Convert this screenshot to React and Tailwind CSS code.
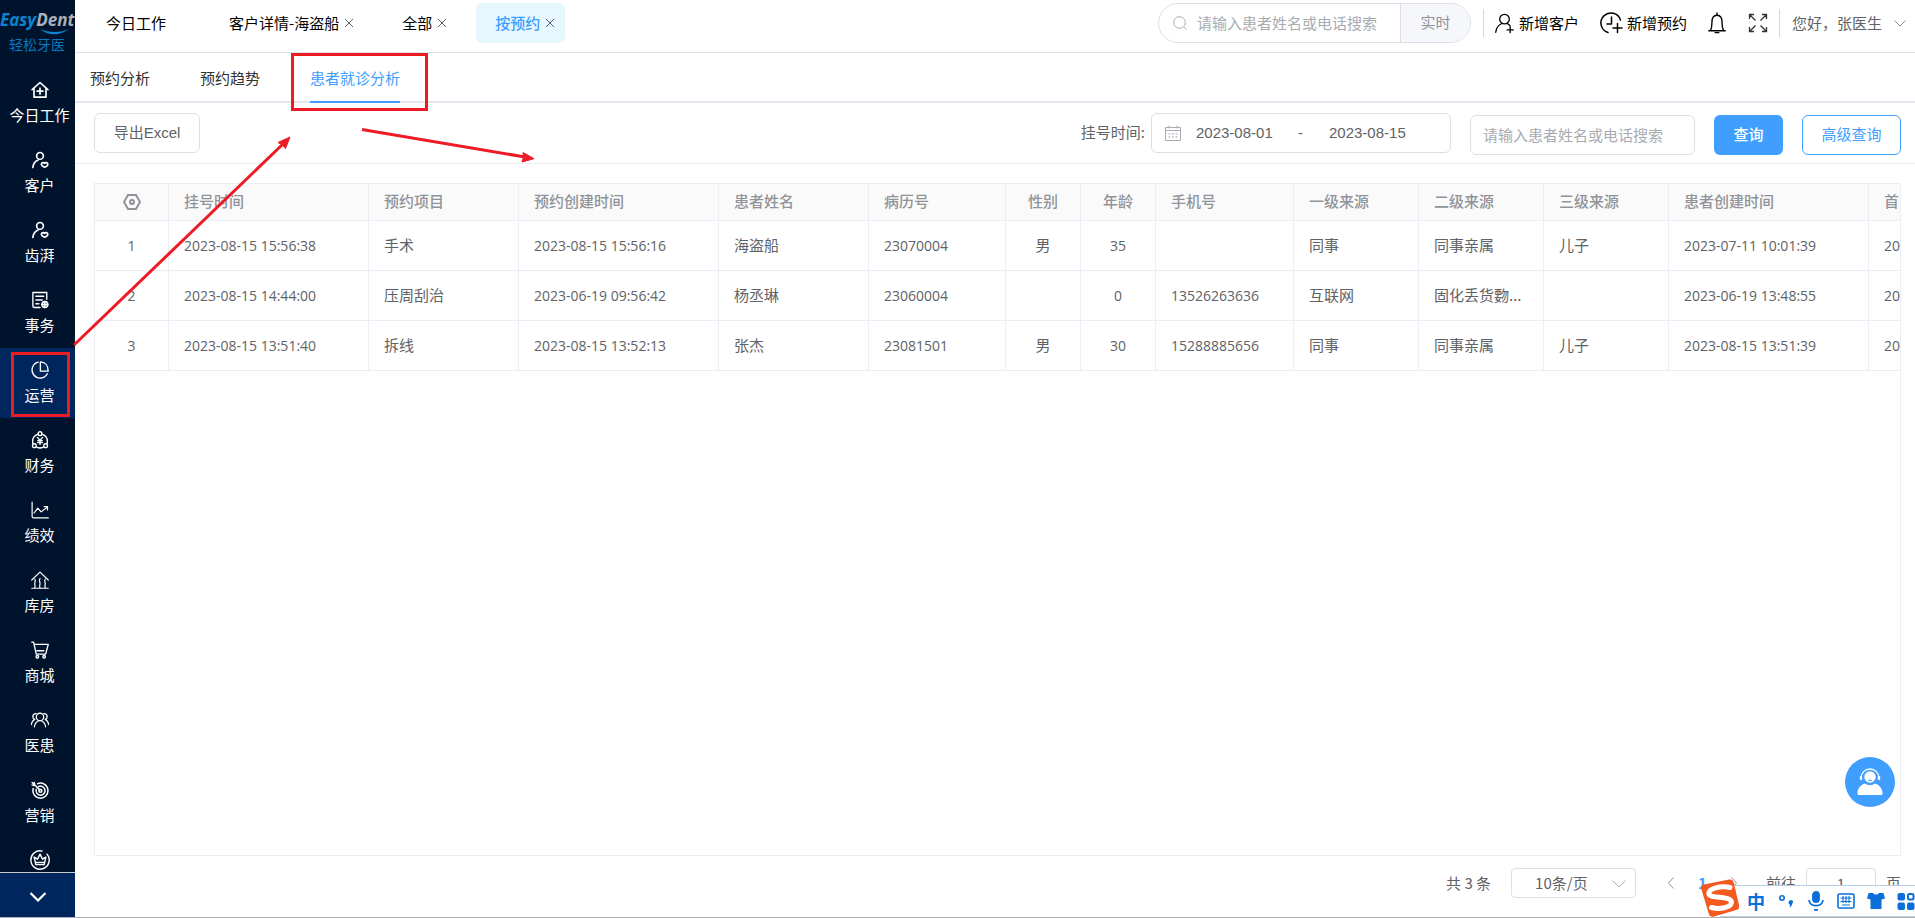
import React, { useState } from "react";

const Icon = ({ className, children, width = 1.8 }) => (
  <svg
    viewBox="0 0 24 24"
    fill="none"
    stroke="currentColor"
    strokeWidth={width}
    strokeLinecap="round"
    strokeLinejoin="round"
    className={className}
    aria-hidden="true"
  >
    {children}
  </svg>
);

const menus = [
  {
    name: "今日工作",
    width: 2.2,
    icon: (
      <>
        <path d="M1.500 11.500 12 2l10.500 9.500" />
        <path d="M4 10v11.500h16V10" />
        <path d="M12 9.500v8M8 13.500h8" />
      </>
    ),
  },
  {
    name: "客户",
    width: 2.2,
    icon: (
      <>
        <circle cx="12" cy="6.500" r="4.500" />
        <path d="M2.500 22c.5-5 3-8.500 7-10" />
        <path d="M18 21.500c-3.500-1-5-3.500-3.500-5.300 1.100-1.200 2.600-.8 3.500.4.900-1.200 2.500-1.600 3.700-.4 1.600 1.900 0 4.500-3.700 5.300z" />
      </>
    ),
  },
  {
    name: "齿湃",
    width: 2.2,
    icon: (
      <>
        <circle cx="12" cy="6.500" r="4.500" />
        <path d="M2.500 22c.5-5 3-8.500 7-10" />
        <path d="M18 21.500c-3.500-1-5-3.500-3.500-5.300 1.100-1.200 2.600-.8 3.500.4.900-1.200 2.500-1.600 3.700-.4 1.600 1.900 0 4.500-3.700 5.300z" />
      </>
    ),
  },
  {
    name: "事务",
    width: 1.8,
    icon: (
      <>
        <path d="M12 22H4.500a2 2 0 0 1-2-2V2H21v9" />
        <path d="M6.500 7H17M6.500 12H15M6.500 17h4" />
        <circle cx="18.500" cy="18" r="4" fill="#ffffff66" />
        <path d="M14.500 18h8M18.500 14v8" />
      </>
    ),
  },
  {
    name: "运营",
    width: 1.8,
    icon: (
      <>
        <path d="M9.500 1.500A10.800 10.800 0 1 0 21.800 17" />
        <path d="M12.500 1.200V13.500H23C23 6.500 19 1.500 12.500 1.200z" />
      </>
    ),
  },
  {
    name: "财务",
    width: 1.8,
    icon: (
      <>
        <circle cx="12" cy="3.500" r="2.500" />
        <circle cx="4.500" cy="19.500" r="2.500" />
        <circle cx="19.500" cy="19.500" r="2.500" />
        <path d="M9 4.500C4 6 1.500 11 2.500 17M15 4.500c5 1.500 7.500 6.500 6.500 12.500M7.500 21.500c3 1.500 6 1.500 9 0" />
        <path d="m8.500 8.500 3.500 4 3.500-4M12 12.500V18M9 13h6M9 15.500h6" />
      </>
    ),
  },
  {
    name: "绩效",
    width: 1.6,
    icon: (
      <>
        <path d="M1.500 1.500v19a2 2 0 0 0 2 2H23" />
        <path d="m4 16 5-6.500 4.500 5L22 8" />
        <path d="M17.500 7.500H22V12" />
      </>
    ),
  },
  {
    name: "库房",
    width: 1.6,
    icon: (
      <>
        <path d="M1 12 12 1.500 23 12M1 23h22" />
        <path d="M5 11c2 2.500-.5 4 0 6.500s1 2.500 0 5M12 10c-2 3 .5 5 0 7.500s-1 2.500 0 5M19 11c-2 2.500.5 4 0 6.500s-1 2.500 0 5" />
      </>
    ),
  },
  {
    name: "商城",
    width: 1.8,
    icon: (
      <>
        <path d="M1 1.500h2.500L7 17.500h12.500L23 4.500H4.500" />
        <path d="M8 13h9" />
        <circle cx="8.500" cy="21" r="1.700" />
        <circle cx="17.500" cy="21" r="1.700" />
      </>
    ),
  },
  {
    name: "医患",
    width: 1.7,
    icon: (
      <>
        <circle cx="12" cy="8" r="5" />
        <path d="M4.500 21c.5-4 2.500-6.500 5.500-8M19.500 21c-.5-4-2.500-6.500-5.500-8" />
        <path d="M7 3.500c-5-.5-6 6-2 8M17 3.500c5-.5 6 6 2 8M.5 18c.3-3 1.500-5 4-6.500M23.500 18c-.3-3-1.500-5-4-6.500" />
      </>
    ),
  },
  {
    name: "营销",
    width: 2,
    icon: (
      <>
        <path d="M9 3.500A10 10 0 1 1 3 10" />
        <path d="M10 7.500A6 6 0 1 1 7 11" />
        <circle cx="12.500" cy="13" r="2" />
        <path d="M1.500 2 12 12M1.500 5.500 5 6l-.5-4" />
      </>
    ),
  },
];

const columns = [
  { key: "time", title: "挂号时间", num: true },
  { key: "item", title: "预约项目" },
  { key: "created", title: "预约创建时间", num: true },
  { key: "name", title: "患者姓名" },
  { key: "code", title: "病历号", num: true },
  { key: "sex", title: "性别", center: true },
  { key: "age", title: "年龄", center: true, num: true },
  { key: "phone", title: "手机号", num: true },
  { key: "source1", title: "一级来源" },
  { key: "source2", title: "二级来源" },
  { key: "source3", title: "三级来源" },
  { key: "patientCreated", title: "患者创建时间", num: true },
  { key: "first", title: "首", num: true },
];

const rows = [
  {
    time: "2023-08-15 15:56:38",
    item: "手术",
    created: "2023-08-15 15:56:16",
    name: "海盗船",
    code: "23070004",
    sex: "男",
    age: "35",
    phone: "",
    source1: "同事",
    source2: "同事亲属",
    source3: "儿子",
    patientCreated: "2023-07-11 10:01:39",
    first: "20",
  },
  {
    time: "2023-08-15 14:44:00",
    item: "压周刮治",
    created: "2023-06-19 09:56:42",
    name: "杨丞琳",
    code: "23060004",
    sex: "",
    age: "0",
    phone: "13526263636",
    source1: "互联网",
    source2: "固化丢货覅...",
    source3: "",
    patientCreated: "2023-06-19 13:48:55",
    first: "20",
  },
  {
    time: "2023-08-15 13:51:40",
    item: "拆线",
    created: "2023-08-15 13:52:13",
    name: "张杰",
    code: "23081501",
    sex: "男",
    age: "30",
    phone: "15288885656",
    source1: "同事",
    source2: "同事亲属",
    source3: "儿子",
    patientCreated: "2023-08-15 13:51:39",
    first: "20",
  },
];

const Sidebar = () => (
  <aside className="w-[75px] shrink-0 flex flex-col bg-[#00132d] text-white">
    <div className="h-[68px] shrink-0 pt-1">
      <div className="relative h-8 text-[17px] leading-8 font-bold italic whitespace-nowrap font-['Open_Sans',sans-serif]">
        <span className="text-[#0a84cf]">Easy</span>
        <span className="text-[#a9b0b8]">Dent</span>
        <svg viewBox="0 0 30 8" className="absolute left-10 top-6 w-[30px] h-2" aria-hidden="true">
          <path d="M0 1c8 7 20 7 29 0-8 4-20 4-29 0z" fill="#0a84cf" />
        </svg>
      </div>
      <div className="pl-[9px] text-sm leading-4 text-[#0a76bd]">轻松牙医</div>
    </div>
    <nav className="flex-1 min-h-0 overflow-hidden">
      {menus.map((menu) => (
        <a
          key={menu.name}
          href="#"
          className={`h-[70px] pt-3 pl-1 flex flex-col items-center gap-[3px] ${
            menu.name === "运营" ? "bg-[#00265e]" : ""
          }`}
        >
          <Icon className="w-5 h-5 p-px" width={menu.width}>
            {menu.icon}
          </Icon>
          <span className="leading-6">{menu.name}</span>
        </a>
      ))}
      <a href="#" aria-label="会员" className="pt-3 pl-1 flex flex-col items-center">
        <Icon className="w-5 h-5" width={1.7}>
          <path d="M14.500 1.300A11 11 0 1 0 20.500 5" />
          <path d="m5 8.500 2 9h10l2-9-4 2.500-3-6-3 6-4-2.500zM7 15h10" />
        </Icon>
      </a>
    </nav>
    <button aria-label="更多菜单" className="h-[45px] shrink-0 border-t border-[#c8ccd2] bg-[#00265e] flex items-center justify-center pt-1">
      <svg viewBox="0 0 18 10" className="w-[18px] h-[10px]" fill="none" stroke="currentColor" strokeWidth="2.200">
        <path d="m1.500 1 7.500 7.500L16.500 1" />
      </svg>
    </button>
  </aside>
);

const CloseIcon = () => (
  <svg viewBox="0 0 10 10" className="w-[10px] h-[10px]" stroke="currentColor" strokeWidth="1" aria-hidden="true">
    <path d="M1 1l8 8M9 1 1 9" />
  </svg>
);

const PageTabs = ({ active, onChange }) => (
  <div className="flex gap-[19px] pl-3">
    {["今日工作", "客户详情-海盗船", "全部", "按预约"].map((tab, i) => (
      <div
        key={tab}
        className={`h-10 flex items-center rounded-md pl-[19px] ${i === 0 ? "pr-[25px]" : "pr-[10px]"} ${
          active === tab ? "bg-[#e6f7ff]" : ""
        }`}
      >
        <button onClick={() => onChange(tab)} className={active === tab ? "text-[#409eff] font-medium" : "text-black"}>
          {tab}
        </button>
        {i > 0 && (
          <button aria-label={`关闭${tab}`} className="ml-[5px] text-[#606266]">
            <CloseIcon />
          </button>
        )}
      </div>
    ))}
  </div>
);

const Header = () => {
  const [active, setActive] = useState("按预约");

  return (
    <header className="h-[53px] shrink-0 pb-[6px] border-b border-[#dfe3e6] flex items-center justify-between">
      <PageTabs active={active} onChange={setActive} />
      <div className="flex items-center pr-[9px] text-black">
        <div className="h-10 w-[313px] flex items-center border border-[#dcdfe6] rounded-full overflow-hidden">
          <svg viewBox="0 0 14 14" className="ml-[14px] w-[14px] h-[14px] text-[#a8abb2]" fill="none" stroke="currentColor" aria-hidden="true">
            <circle cx="6.500" cy="6.500" r="5.800" />
            <path d="m10.500 10.500 3 3" />
          </svg>
          <input
            aria-label="搜索患者"
            placeholder="请输入患者姓名或电话搜索"
            className="flex-1 min-w-0 h-full pl-[10px] pb-[2px] outline-none placeholder:text-[#a8abb2]"
          />
          <button className="h-full w-[70px] pb-[2px] border-l border-[#dcdfe6] bg-[#f5f7fa] text-[#909399]">实时</button>
        </div>
        <span className="ml-3 w-px h-7 bg-[#d5d7db]" />
        <button className="ml-[10px] flex items-center gap-1">
          <Icon className="w-[21px] h-[21px]" width={1.5}>
            <circle cx="12" cy="7" r="5.500" />
            <path d="M2 22c.5-5 3-8.500 7-10M15 12c1.500.6 2.500 1.500 3.500 3M18.500 16v6.500M15 19.300h7" />
          </Icon>
          <span>新增客户</span>
        </button>
        <button className="ml-5 flex items-center gap-1">
          <Icon className="w-6 h-6" width={1.5}>
            <path d="M9 21.500A10 10 0 1 1 21.500 9" />
            <path d="M12.500 6v7H8M18.500 12.500v9M14 17h9" />
          </Icon>
          <span>新增预约</span>
        </button>
        <button aria-label="通知" className="ml-[19px]">
          <Icon className="w-[22px] h-[22px]" width={1.5}>
            <path d="M3 20.500h18M5 20c1-2 1.500-3.500 1.500-9 0-4.500 2-7.500 5.500-7.500s5.500 3 5.500 7.500c0 5.500.5 7 1.500 9" />
            <path d="M12 1v2M10 22.500h4" />
          </Icon>
        </button>
        <button aria-label="全屏" className="ml-5">
          <svg viewBox="0 0 20 20" className="w-5 h-5" fill="none" stroke="#303133" strokeWidth="1.300">
            <path d="M1.500 6V1.500H6M1.500 1.500l6 6M14 1.500h4.500V6M18.500 1.500l-6 6M1.500 14v4.500H6M1.500 18.500l6-6M14 18.500h4.500V14M18.500 18.500l-6-6" />
          </svg>
        </button>
        <span className="ml-[11px] w-px h-7 bg-[#d5d7db]" />
        <button className="ml-3 flex items-center gap-3 text-[#606266]">
          <span>您好，张医生</span>
          <svg viewBox="0 0 12 7" className="w-3 h-[7px]" fill="none" stroke="#909399">
            <path d="m.5.5 5.500 5.500L11.500.5" />
          </svg>
        </button>
      </div>
    </header>
  );
};

const SubTabs = () => {
  const [active, setActive] = useState("患者就诊分析");

  return (
    <div className="h-[50px] shrink-0 pl-[15px] flex gap-[50px] border-b-2 border-[#e4e7ed]">
      {["预约分析", "预约趋势", "患者就诊分析"].map((tab) => (
        <button
          key={tab}
          onClick={() => setActive(tab)}
          className={`h-[50px] pt-[2px] border-b-2 ${
            active === tab ? "border-[#409eff] text-[#409eff]" : "border-transparent text-[#303133]"
          }`}
        >
          {tab}
        </button>
      ))}
    </div>
  );
};

const FilterBar = () => (
  <div className="h-[61px] shrink-0 pl-[19px] pr-[14px] flex items-start justify-between border-b border-[#ebeef5]">
    <button className="mt-[10px] h-10 w-[106px] border border-[#dcdfe6] rounded-md text-[#606266] font-['Liberation_Sans','Noto_Sans_CJK_SC',sans-serif]">
      导出Excel
    </button>
    <div className="flex items-start">
      <div className="mt-[10px] flex items-center">
        <label htmlFor="startDate" className="pr-[6px] pb-[2px] text-[#606266]">
          挂号时间:
        </label>
        <div className="h-10 w-[300px] pl-[13px] flex items-center border border-[#dcdfe6] rounded-md text-[#606266] font-['Liberation_Sans',sans-serif]">
          <svg viewBox="0 0 16 16" className="w-4 h-4 shrink-0" fill="none" stroke="#a8abb2" aria-hidden="true">
            <path d="M.5 2.500h15v13H.5zM.5 5.500h15M4 .5v3M12 .5v3" />
            <path d="M3.500 9h9M3.500 12h9" strokeDasharray="2 1.500" />
          </svg>
          <input id="startDate" defaultValue="2023-08-01" className="ml-[15px] w-[88px] outline-none" />
          <span className="w-[45px] pl-[14px]">-</span>
          <input aria-label="结束日期" defaultValue="2023-08-15" className="w-[88px] outline-none" />
        </div>
      </div>
      <div className="mt-3 flex">
        <input
          aria-label="患者姓名或电话"
          placeholder="请输入患者姓名或电话搜索"
          className="ml-[19px] h-10 w-[225px] px-3 pb-[2px] border border-[#dcdfe6] rounded-md outline-none placeholder:text-[#a8abb2]"
        />
        <button className="ml-[19px] h-10 w-[69px] pb-[2px] bg-[#409eff] text-white rounded-md font-medium">查询</button>
        <button className="ml-[19px] h-10 w-[99px] pb-[2px] border border-[#409eff] text-[#409eff] rounded-md">
          高级查询
        </button>
      </div>
    </div>
  </div>
);

const VisitTable = () => (
  <div className="flex-1 min-h-0 mt-[19px] ml-[19px] mr-[14px] border border-[#ebeef5] overflow-hidden">
    <table className="w-[1900px] table-fixed border-separate border-spacing-0 text-[#606266]">
      <colgroup>
        <col className="w-[74px]" />
        <col className="w-[200px]" />
        <col className="w-[150px]" />
        <col className="w-[200px]" />
        <col className="w-[150px]" />
        <col className="w-[137px]" />
        <col className="w-[75px]" />
        <col className="w-[75px]" />
        <col className="w-[138px]" />
        <col className="w-[125px]" />
        <col className="w-[125px]" />
        <col className="w-[125px]" />
        <col className="w-[200px]" />
        <col />
      </colgroup>
      <thead>
        <tr className="h-[37px] bg-[#fafafa] text-[#909399]">
          <th className="border-r border-b border-[#ebeef5]">
            <svg viewBox="0 0 18 16" className="w-[18px] h-4 mx-auto" fill="none" stroke="currentColor" strokeWidth="2" aria-label="列设置">
              <path d="M5 1h8l4 7-4 7H5L1 8z" />
              <circle cx="9" cy="8" r="2" />
            </svg>
          </th>
          {columns.map((col) => (
            <th
              key={col.key}
              className={`border-r border-b border-[#ebeef5] px-[15px] pb-[2px] font-medium ${
                col.center ? "text-center" : "text-left"
              }`}
            >
              {col.title}
            </th>
          ))}
        </tr>
      </thead>
      <tbody>
        {rows.map((row, i) => (
          <tr key={row.time} className="h-[50px]">
            <td className="border-r border-b border-[#ebeef5] text-center text-sm font-['Open_Sans',sans-serif]">{i + 1}</td>
            {columns.map((col) => (
              <td
                key={col.key}
                className={`border-r border-b border-[#ebeef5] px-[15px] whitespace-nowrap ${
                  col.center ? "text-center" : ""
                } ${col.num ? "text-sm font-['Open_Sans',sans-serif]" : "pb-[2px]"}`}
              >
                {row[col.key]}
              </td>
            ))}
          </tr>
        ))}
      </tbody>
    </table>
  </div>
);

const Pagination = () => (
  <div className="h-[61px] shrink-0 pr-[14px] pt-3 flex items-start justify-end text-[#606266]">
    <div className="flex items-center h-[30px]">
      <span>共 3 条</span>
      <div className="relative ml-5">
        <select
          aria-label="每页条数"
          className="appearance-none h-[30px] w-[125px] pl-[23px] border border-[#dcdfe6] rounded bg-white"
        >
          <option>10条/页</option>
        </select>
        <svg viewBox="0 0 14 8" className="absolute right-[10px] top-[12px] w-[14px] h-2 pointer-events-none" fill="none" stroke="#a8abb2">
          <path d="m.5.5 6.500 6.500L13.500.5" />
        </svg>
      </div>
      <button aria-label="上一页" className="ml-8">
        <svg viewBox="0 0 6 12" className="w-[6px] h-3" fill="none" stroke="#909399">
          <path d="M5.500.5.500 6l5 5.500" />
        </svg>
      </button>
      <button className="ml-6 font-bold text-[#409eff]">1</button>
      <button aria-label="下一页" className="ml-6">
        <svg viewBox="0 0 6 12" className="w-[6px] h-3" fill="none" stroke="#909399">
          <path d="M.5.5l5 5.500-5 5.500" />
        </svg>
      </button>
      <label htmlFor="jumper" className="ml-[29px]">
        前往
      </label>
      <input
        id="jumper"
        defaultValue="1"
        className="mx-[10px] w-[70px] h-[30px] border border-[#dcdfe6] rounded text-center outline-none"
      />
      <span>页</span>
    </div>
  </div>
);

// input method bar docked at the bottom right corner
const ImeBar = () => (
  <div className="absolute right-0 bottom-0 flex items-end text-[#0a6fd8]">
    <svg viewBox="0 0 40 38" className="w-10 h-[38px] -mr-5 z-10" aria-hidden="true">
      <path d="M4 5.500 29 .5c2.500-.4 4 .5 4.700 3L39 26c.6 2.500-.3 4.200-2.700 5L14 37.500c-3 .6-4.500-.4-5.300-3L1 9c-.4-2 .6-3 3-3.500z" fill="#f4591f" />
      <path
        d="M30 8.500C21 6.500 8 9.500 9 15c1 5 22 1.500 22.500 8 .3 5-11 8-20 5.500"
        fill="none"
        stroke="#fff"
        strokeWidth="5"
        strokeLinecap="round"
      />
    </svg>
    <div className="h-8 pl-[27px] flex items-center gap-3 bg-white border-y border-[#b9cfe6]">
      <button className="w-[18px] text-lg leading-7 font-bold">中</button>
      <svg viewBox="0 0 18 18" className="w-[18px] h-[18px]" aria-hidden="true">
        <circle cx="5" cy="6" r="2.200" fill="none" stroke="currentColor" strokeWidth="1.600" />
        <path d="M12 9.500a2 2 0 1 1 3.500 1.800c-.3 2-1.500 3.500-3 4.200.4-1.200.6-2.200.5-3a2 2 0 0 1-1-3z" fill="currentColor" />
      </svg>
      <svg viewBox="0 0 16 20" className="w-[18px] h-5" fill="none" stroke="currentColor" strokeWidth="1.800" aria-hidden="true">
        <rect x="5" y="1" width="6" height="10" rx="3" fill="currentColor" />
        <path d="M1 9c.5 7.500 13.500 7.500 14 0M6 18.800h4" />
      </svg>
      <svg viewBox="0 0 18 16" className="w-[18px] h-4" fill="none" stroke="currentColor" strokeWidth="1.600" aria-hidden="true">
        <rect x="1" y="1" width="16" height="14" rx="1.500" />
        <path d="M3.500 5h11M3.500 8.500h11M5 12h8M6 3v7M9 3v7M12 3v7" strokeWidth="1.100" />
      </svg>
      <svg viewBox="0 0 18 18" className="w-[18px] h-[18px]" fill="currentColor" aria-hidden="true">
        <path d="M1.500 1H6c1.500 2 4.500 2 6 0h4.500L18 6.500l-3.500 1V17h-11V7.500L0 6.500z" />
      </svg>
      <svg viewBox="0 0 17 17" className="w-[18px] h-[17px]" fill="currentColor" aria-hidden="true">
        <rect x="0" y="0" width="7.500" height="7.500" rx="2" />
        <rect x="0" y="9.500" width="7.500" height="7.500" rx="2" />
        <rect x="9.500" y="9.500" width="7.500" height="7.500" rx="2" />
        <rect x="10.500" y="1" width="5.500" height="5.500" rx="1.500" fill="none" stroke="currentColor" strokeWidth="2" />
      </svg>
    </div>
  </div>
);

// red boxes and arrows drawn over the page
const Marks = () => (
  <svg width="600" height="430" className="absolute left-0 top-0 pointer-events-none" fill="none" stroke="#ed1c24" strokeWidth="3" aria-hidden="true">
    <rect x="292.500" y="54.500" width="134" height="55" />
    <rect x="12.500" y="353.500" width="56" height="62" />
    <path d="M74 345 283 144" />
    <path d="M290 137l-4.500 11.500-3-3.500-4.500-2.500z" fill="#ed1c24" strokeWidth="1" />
    <path d="M362 129.500 525 157" />
    <path d="M534 158.700l-12 3.300 1.500-5-.5-4.500z" fill="#ed1c24" strokeWidth="1" />
  </svg>
);

const App = () => {
  return (
    <div className="relative h-screen flex overflow-hidden border-b border-[#b0b0b0] bg-white text-[15px] leading-5 font-['Noto_Sans_CJK_SC',sans-serif]">
      <Sidebar />
      <main className="flex-1 min-w-0 flex flex-col">
        <Header />
        <SubTabs />
        <FilterBar />
        <VisitTable />
        <Pagination />
      </main>

      <button
        aria-label="在线客服"
        className="absolute right-5 bottom-[110px] w-[50px] h-[50px] rounded-full bg-[#409eff] flex items-center justify-center"
      >
        <svg viewBox="0 0 28 28" className="w-7 h-7" fill="#fff">
          <circle cx="14" cy="9" r="5.700" />
          <path d="M5 10a9 9 0 0 1 18 0" fill="none" stroke="#fff" strokeWidth="1.300" />
          <rect x="3.800" y="8" width="2.400" height="4" rx="1" />
          <rect x="21.800" y="8" width="2.400" height="4" rx="1" />
          <path d="M12 12.300h4" stroke="#409eff" />
          <path d="M9 15.500c3 2.300 7 2.300 10 0 4 1 7.500 5 7.500 9.500 0 1.500-.5 2-2 2h-21c-1.500 0-2-.5-2-2 0-4.500 3.500-8.500 7.500-9.500z" />
        </svg>
      </button>
      <ImeBar />
      <Marks />
    </div>
  );
};

export default App;
